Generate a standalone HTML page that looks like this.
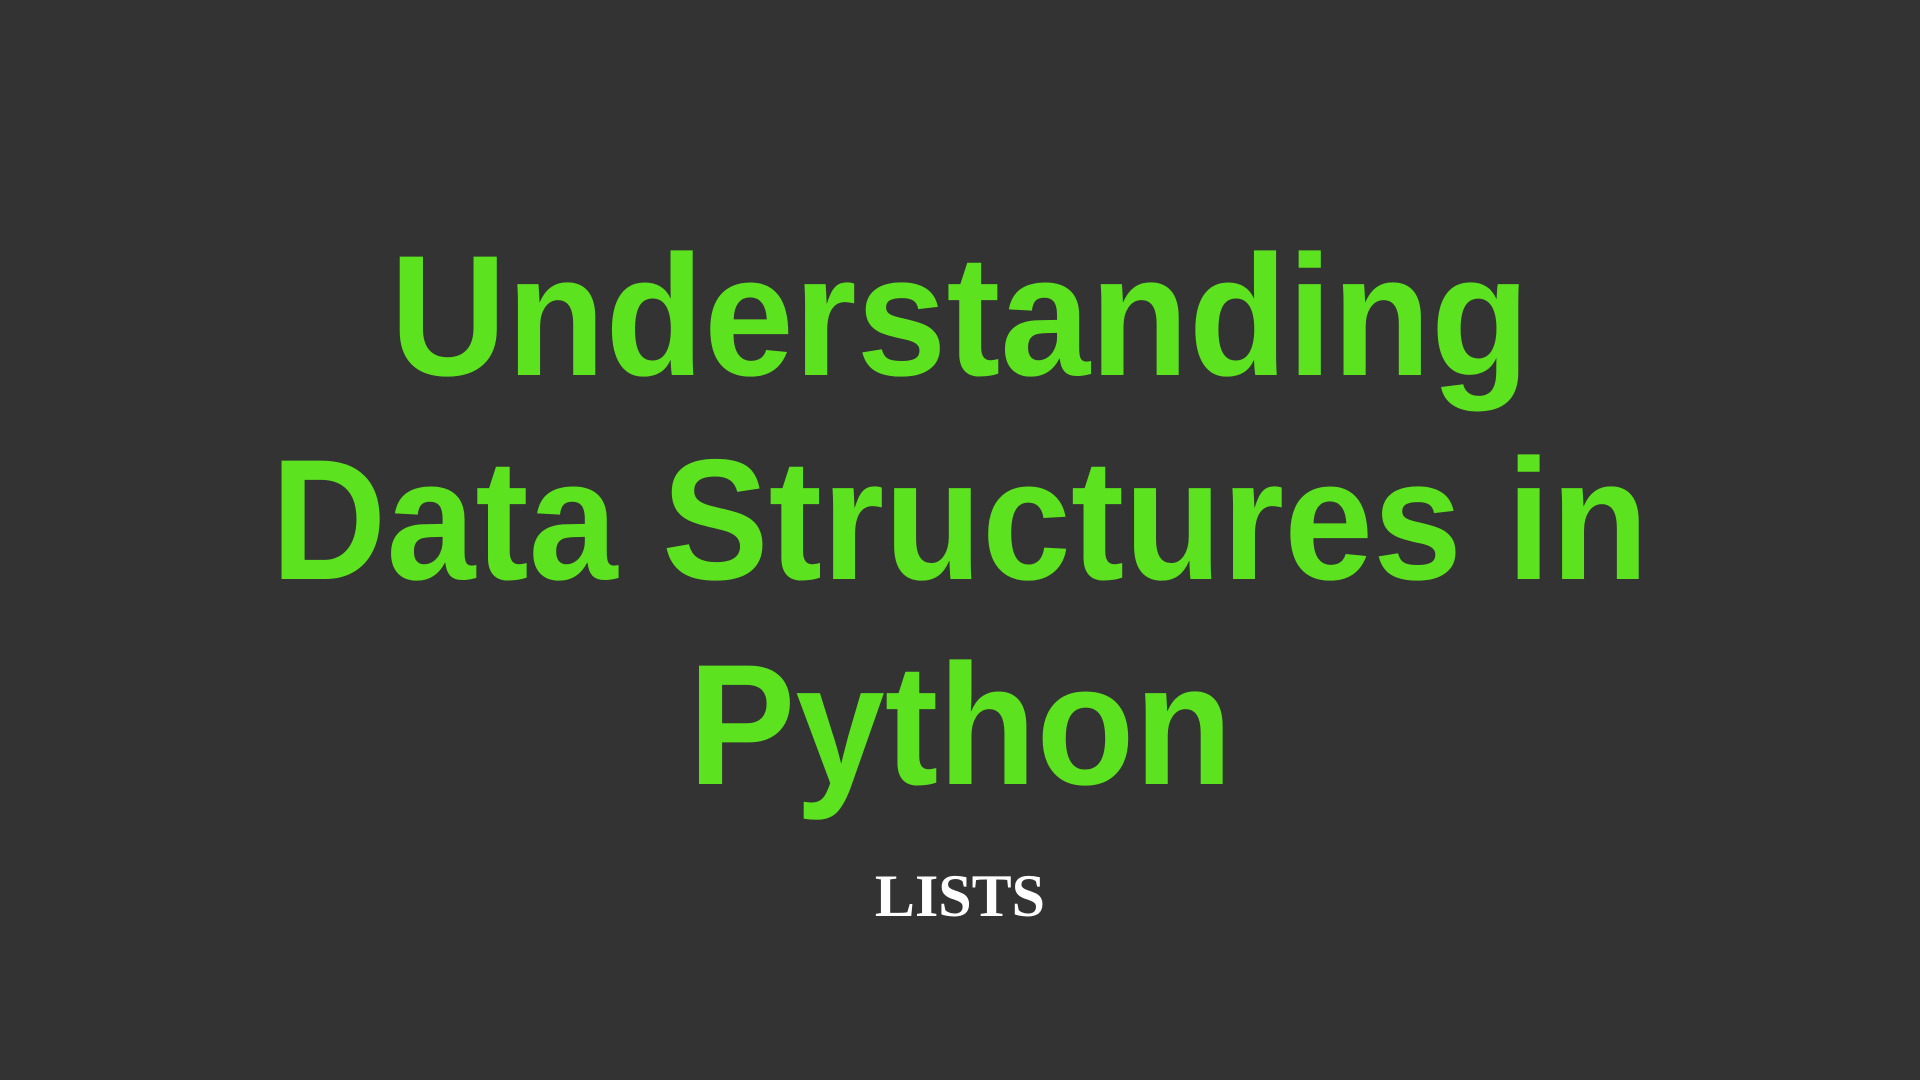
<!DOCTYPE html>
<html><head><meta charset="utf-8"><style>
html,body{margin:0;padding:0;background:#333333;width:1920px;height:1080px;overflow:hidden;}
.l{position:absolute;left:0;width:1920px;text-align:center;font-family:"Liberation Sans",sans-serif;font-weight:bold;color:#5ce21e;font-size:172px;line-height:normal;white-space:nowrap;}
.l span{display:inline-block;}
.s{position:absolute;left:0;width:1920px;text-align:center;font-family:"Liberation Serif",serif;font-weight:bold;color:#fff;font-size:60px;line-height:normal;}
</style></head><body>
<div class="l" style="top:217px"><span style="transform:scaleX(0.939)">Understanding</span></div>
<div class="l" style="top:421px"><span style="transform:scaleX(0.930)">Data Structures in</span></div>
<div class="l" style="top:626px"><span style="transform:scaleX(0.934)">Python</span></div>
<div class="s" style="top:862px">LISTS</div>
</body></html>
